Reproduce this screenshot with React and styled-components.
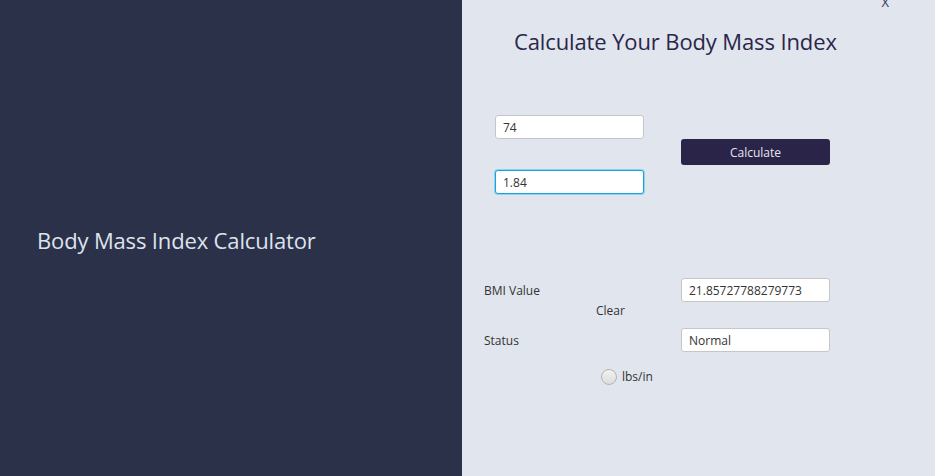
import React from 'react';
import styled, { createGlobalStyle } from 'styled-components';

const GlobalStyle = createGlobalStyle`
  html, body {
    margin: 0;
    padding: 0;
    height: 100%;
  }
  body {
    font-family: "Open Sans", "Noto Sans", sans-serif;
    overflow: hidden;
  }
  #root {
    height: 100%;
  }
`;

const App = () => {
  return (
    <>
      <GlobalStyle />
      <Wrapper>
        <SidePanel>
          <SideTitle>Body Mass Index Calculator</SideTitle>
        </SidePanel>
        <MainPanel>
          <CloseRow>
            <CloseButton>X</CloseButton>
          </CloseRow>
          <Title>Calculate Your Body Mass Index</Title>
          <InputArea>
            <InputColumn>
              <Field defaultValue="74" />
              <Field defaultValue="1.84" focused />
            </InputColumn>
            <CalcButton>Calculate</CalcButton>
          </InputArea>
          <Results>
            <ResultRow>
              <Label>BMI Value</Label>
              <Field readOnly defaultValue="21.85727788279773" />
            </ResultRow>
            <ClearLink>Clear</ClearLink>
            <ResultRow>
              <Label>Status</Label>
              <Field readOnly defaultValue="Normal" />
            </ResultRow>
            <RadioRow>
              <Radio />
              <RadioText>lbs/in</RadioText>
            </RadioRow>
          </Results>
        </MainPanel>
      </Wrapper>
    </>
  );
};

export default App;

const Wrapper = styled.div`
  display: flex;
  width: 935px;
  height: 476px;
`;

const SidePanel = styled.div`
  width: 462px;
  flex-shrink: 0;
  background: #2a3149;
  display: flex;
  align-items: center;
  padding-left: 37px;
  box-sizing: border-box;
`;

const SideTitle = styled.h1`
  margin: 4px 0 0 0;
  font-weight: 400;
  font-size: 22px;
  color: #dfe3ee;
  letter-spacing: -0.15px;
`;

const MainPanel = styled.div`
  flex: 1;
  background: #e1e5ee;
  display: flex;
  flex-direction: column;
`;

const CloseRow = styled.div`
  display: flex;
  justify-content: flex-end;
  height: 10px;
  padding-right: 46px;
`;

const CloseButton = styled.span`
  font-size: 13px;
  line-height: 13px;
  margin-top: -4px;
  color: #3a3660;
  cursor: pointer;
`;

const Title = styled.h2`
  margin: 17px 0 0 52px;
  font-weight: 400;
  font-size: 22px;
  line-height: 28px;
  color: #2a2549;
  letter-spacing: -0.12px;
`;

const InputArea = styled.div`
  display: flex;
  align-items: flex-start;
  gap: 37px;
  margin: 60px 0 0 33px;
`;

const InputColumn = styled.div`
  display: flex;
  flex-direction: column;
  gap: 31px;
`;

const Field = styled.input`
  width: 149px;
  height: 24px;
  box-sizing: border-box;
  border: ${p => (p.focused ? '1.5px solid #1aa3dc' : '1px solid #c6c6c6')};
  border-radius: 3px;
  background: #fff;
  padding: 0 7px;
  font-family: "Open Sans", "Noto Sans", sans-serif;
  font-size: 12px;
  color: #333;
  outline: none;
  box-shadow: ${p => (p.focused ? '0 0 0 1px #8fd0ee' : 'none')};
`;

const CalcButton = styled.button`
  width: 149px;
  height: 26px;
  margin-top: 24px;
  border: none;
  border-radius: 3px;
  background: #2b2449;
  color: #e6e6f0;
  font-family: "Open Sans", "Noto Sans", sans-serif;
  font-size: 12px;
  cursor: pointer;
`;

const Results = styled.div`
  display: flex;
  flex-direction: column;
  margin: 84px 0 0 22px;
`;

const ResultRow = styled.div`
  display: flex;
  align-items: center;
`;

const Label = styled.span`
  width: 197px;
  font-size: 12px;
  color: #333;
`;

const ClearLink = styled.span`
  margin: 1px 0 9px 112px;
  font-size: 12px;
  line-height: 16px;
  color: #333;
  cursor: pointer;
`;

const RadioRow = styled.label`
  display: flex;
  align-items: center;
  gap: 5px;
  margin: 16px 0 0 117px;
  cursor: pointer;
`;

const Radio = styled.span`
  width: 16px;
  height: 16px;
  border-radius: 50%;
  border: 1px solid #b4b4b4;
  background: linear-gradient(#f2f2f2, #dcdcdc);
  box-sizing: border-box;
`;

const RadioText = styled.span`
  font-size: 12px;
  color: #333;
`;
